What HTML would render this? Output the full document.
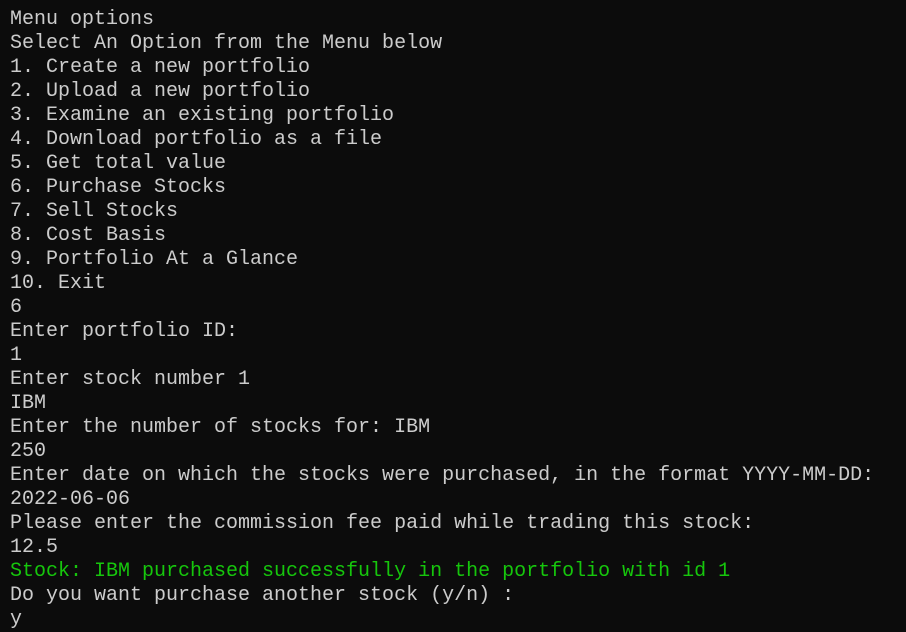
<!DOCTYPE html>
<html><head><meta charset="utf-8"><style>
html,body{margin:0;padding:0;background:#0c0c0c;width:906px;height:631px;overflow:hidden}
pre{margin:0;position:absolute;left:10px;top:-16px;font-family:"Liberation Mono",monospace;font-size:20px;line-height:24px;color:#cccccc}
.g{color:#16c60c}
</style></head><body><pre>"
Menu options
Select An Option from the Menu below
1. Create a new portfolio
2. Upload a new portfolio
3. Examine an existing portfolio
4. Download portfolio as a file
5. Get total value
6. Purchase Stocks
7. Sell Stocks
8. Cost Basis
9. Portfolio At a Glance
10. Exit
6
Enter portfolio ID:
1
Enter stock number 1
IBM
Enter the number of stocks for: IBM
250
Enter date on which the stocks were purchased, in the format YYYY-MM-DD:
2022-06-06
Please enter the commission fee paid while trading this stock:
12.5
<span class="g">Stock: IBM purchased successfully in the portfolio with id 1</span>
Do you want purchase another stock (y/n) :
y</pre></body></html>
